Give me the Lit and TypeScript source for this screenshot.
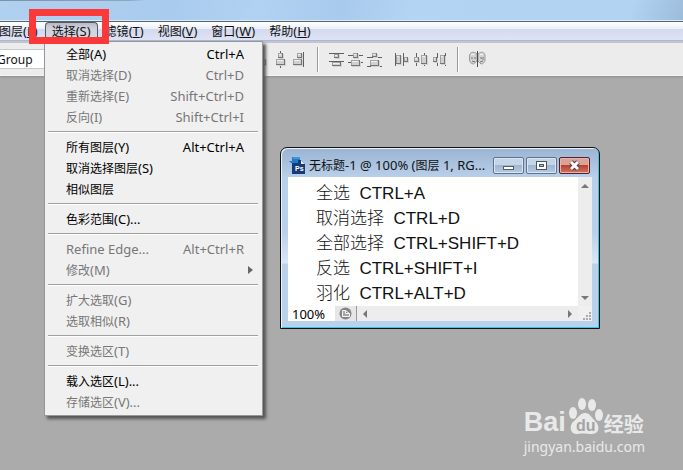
import { LitElement, html, svg, css } from "lit";
import { customElement, property } from "lit/decorators.js";

interface Item {
  label: string;
  keys?: string;
  off?: boolean;
  sub?: boolean;
}

// Latin runs are set one pixel larger than the Chinese glyphs around them.
const mixed = (text: string) =>
  text
    .split(/([\x20-\x7e]+)/)
    .filter((part) => part !== "")
    .map((part) => (/^[\x20-\x7e]/.test(part) ? html`<span class="latin">${part}</span>` : part));

const latin = css`
  .latin {
    font-size: 13px;
  }
`;

const MENUS: [string, string][] = [
  ["图层", "L"],
  ["选择", "S"],
  ["滤镜", "T"],
  ["视图", "V"],
  ["窗口", "W"],
  ["帮助", "H"],
];

const SELECT_MENU: Item[][] = [
  [
    { label: "全部(A)", keys: "Ctrl+A" },
    { label: "取消选择(D)", keys: "Ctrl+D", off: true },
    { label: "重新选择(E)", keys: "Shift+Ctrl+D", off: true },
    { label: "反向(I)", keys: "Shift+Ctrl+I", off: true },
  ],
  [{ label: "所有图层(Y)", keys: "Alt+Ctrl+A" }, { label: "取消选择图层(S)" }, { label: "相似图层" }],
  [{ label: "色彩范围(C)..." }],
  [
    { label: "Refine Edge...", keys: "Alt+Ctrl+R", off: true },
    { label: "修改(M)", off: true, sub: true },
  ],
  [
    { label: "扩大选取(G)", off: true },
    { label: "选取相似(R)", off: true },
  ],
  [{ label: "变换选区(T)", off: true }],
  [{ label: "载入选区(L)..." }, { label: "存储选区(V)...", off: true }],
];

@customElement("menu-bar")
export class MenuBar extends LitElement {
  static styles = [
    latin,
    css`
      :host {
        display: block;
        border-top: 1px solid #56636f;
        border-bottom: 1px solid #b2bbd6;
        background: linear-gradient(#ffffff 0, #eaf0f8 7px, #d3d9ec 7px, #dfe3f7 100%);
      }
      .bar {
        display: flex;
        height: 18px;
        margin-left: -8px;
      }
      .top {
        font: inherit;
        color: #111;
        white-space: nowrap;
        line-height: 16px;
        padding: 0 6px;
        border: 1px solid transparent;
        border-radius: 4px 4px 0 0;
        background: none;
      }
      .open {
        border-color: #555a64 #555a64 transparent;
        background: linear-gradient(#b7bac4, #cfd2dc 5px, #d6d9e4);
      }
      .hot {
        text-decoration: underline;
      }
    `,
  ];
  render() {
    return html`<nav class="bar" aria-label="菜单">
      ${MENUS.map(
        ([name, key]) =>
          html`<button class="top ${key === "S" ? "open" : ""}">${name}<span class="latin">(<span class="hot">${key}</span>)</span></button>`
      )}
    </nav>`;
  }
}

const box = (x: number, y: number, w: number, h: number) => svg`
  <rect x=${x + 1} y=${y + 1} width=${w} height=${h} fill="#d2d2d2"/>
  <rect x=${x} y=${y} width=${w} height=${h} fill="#757575"/>
  <rect x=${x} y=${y} width=${w - 1} height=${h - 1} fill="#a2a2a2"/>
  <rect x=${x + 1} y=${y + 1} width=${w - 2} height=${h - 2} fill="#d0d0d0"/>
  <rect x=${x + 1} y=${y + 1} width=${w - 3} height="1" fill="#f0f0f0"/>`;
const bar = (x: number, y: number, w: number, h: number) =>
  svg`<rect x=${x} y=${y} width=${w} height=${h} fill="#606060"/>`;

const TOOLS = [
  [
    { name: "左对齐", art: svg`${bar(3, 2, 1, 15)}${box(5, 3, 5, 5)}${box(5, 9, 9, 6)}` },
    { name: "水平居中对齐", art: svg`${bar(9, 1, 1, 17)}${box(7, 3, 5, 5)}${box(5, 9, 9, 6)}` },
    { name: "右对齐", art: svg`${bar(13, 2, 1, 15)}${box(7, 3, 5, 5)}${box(3, 9, 9, 6)}` },
  ],
  [
    { name: "按顶分布", art: svg`${bar(2, 3, 15, 1)}${bar(2, 11, 15, 1)}${box(7, 4, 5, 4)}${box(5, 12, 9, 4)}` },
    { name: "垂直居中分布", art: svg`${bar(2, 5, 15, 1)}${bar(2, 12, 15, 1)}${box(7, 3, 5, 5)}${box(5, 10, 9, 6)}` },
    { name: "按底分布", art: svg`${bar(2, 7, 15, 1)}${bar(2, 16, 15, 1)}${box(7, 3, 5, 4)}${box(5, 10, 9, 6)}` },
  ],
  [
    { name: "按左分布", art: svg`${bar(3, 3, 1, 13)}${bar(11, 3, 1, 13)}${box(4, 5, 5, 9)}${box(12, 7, 4, 5)}` },
    { name: "水平居中分布", art: svg`${bar(5, 3, 1, 13)}${bar(13, 3, 1, 13)}${box(3, 7, 5, 5)}${box(10, 5, 6, 9)}` },
    { name: "按右分布", art: svg`${bar(7, 3, 1, 13)}${bar(15, 3, 1, 13)}${box(3, 7, 4, 5)}${box(10, 5, 5, 9)}` },
  ],
];

@customElement("options-bar")
export class OptionsBar extends LitElement {
  static styles = css`
    :host {
      display: block;
      overflow: hidden;
      border-top: 2px solid #c3c5ce;
      border-bottom: 1px solid #f4f4f4;
      background: #ececec;
      box-shadow: 0 1px 2px #8c8c8c;
    }
    .row {
      display: flex;
      align-items: center;
      height: 32px;
      margin-left: -6px;
    }
    .field {
      box-sizing: border-box;
      width: 250px;
      height: 20px;
      margin-right: 8px;
      padding: 0 2px;
      border: 1px solid #c4c9d0;
      font: inherit;
      color: #111;
      background: #fff;
    }
    .set {
      display: flex;
      margin-right: 8px;
    }
    .tool {
      width: 19px;
      height: 18px;
      padding: 0;
      border: 0;
      background: none;
    }
    .icon {
      display: block;
    }
    .rule {
      width: 1px;
      height: 25px;
      margin-right: 8px;
      border-right: 1px solid #fff;
      background: #9a9a9a;
    }
  `;
  render() {
    const group = (tools: (typeof TOOLS)[number]) => html`<div class="set">
      ${tools.map(
        (t) => html`<button class="tool" aria-label=${t.name}>
          <svg class="icon" width="19" height="18" shape-rendering="crispEdges">${t.art}</svg>
        </button>`
      )}
    </div>`;
    return html`<div class="row">
      <input class="field" aria-label="自动选择" value="Group" />
      ${group(TOOLS[0])}
      <div class="rule"></div>
      ${group(TOOLS[1])} ${group(TOOLS[2])}
      <div class="rule"></div>
      <button class="tool" aria-label="自动对齐图层">
        <svg class="icon" width="19" height="18">
          <g fill="#d3d3d3" stroke="#9a9a9a">
            <path d="M10 4C7 1 2.500 2 2.500 6v4c0 2 2 4 4 4l3.500-3z" />
            <path d="M11 4c3-3 7-2 7 2v4c0 2-2 4-4 4l-3-3z" />
          </g>
          <path d="M4 5c1-1 2-1 3 0M13 5c1-1 2-1 3 0" stroke="#fff" fill="none" />
          <path d="M4 8h2M13 8h2M5 11l3 1M13 12l3-1M16 7v3M8 7v2" stroke="#777" fill="none" />
          <path d="M10.500 1v16" stroke="#4c4c4c" />
        </svg>
      </button>
    </div>`;
  }
}

@customElement("drop-menu")
export class DropMenu extends LitElement {
  @property({ attribute: false }) groups: Item[][] = [];
  static styles = [
    latin,
    css`
      :host {
        display: block;
        box-sizing: border-box;
        padding: 1px 2px 3px;
        border: 1px solid #979797;
        background: #f0f0f0;
        box-shadow: 3px 3px 3px #555;
      }
      .group + .group {
        padding-top: 9px;
        background:
          linear-gradient(#a0a0a0, #a0a0a0) 1px 4px / calc(100% - 3px) 1px no-repeat,
          linear-gradient(#fff, #fff) 1px 5px / calc(100% - 3px) 1px no-repeat;
      }
      .item {
        display: flex;
        justify-content: space-between;
        align-items: center;
        width: 100%;
        height: 21px;
        padding: 0 16px 0 19px;
        border: 0;
        font: inherit;
        color: #000;
        background: none;
        white-space: nowrap;
      }
      .item:disabled {
        color: #777;
      }
      .arrow {
        margin-right: -9px;
      }
    `,
  ];
  render() {
    return this.groups.map(
      (group) => html`<div class="group" role="group">
        ${group.map(
          (item) => html`<button class="item" role="menuitem" ?disabled=${item.off}>
            <span>${mixed(item.label)}</span>
            ${item.keys ? html`<span class="latin">${item.keys}</span>` : ""}
            ${item.sub
              ? html`<svg class="arrow" width="5" height="8"><path d="M0 0l5 4-5 4z" fill="#666" /></svg>`
              : ""}
          </button>`
        )}
      </div>`
    );
  }
}

const LINES = [
  ["全选", "CTRL+A"],
  ["取消选择", "CTRL+D"],
  ["全部选择", "CTRL+SHIFT+D"],
  ["反选", "CTRL+SHIFT+I"],
  ["羽化", "CTRL+ALT+D"],
];

@customElement("document-window")
export class DocumentWindow extends LitElement {
  static styles = [
    latin,
    css`
      :host {
        display: block;
        box-sizing: border-box;
        padding: 0 6px 7px;
        border: 1px solid #111;
        border-radius: 7px 7px 0 0;
        background: linear-gradient(#9bb4d2, #b9d0ea 30px, #bad1eb 85px, #d9e7f6 115px, #b9d1ea 116px);
        box-shadow:
          inset 1px 1px #eaf4fc,
          inset -1px -1px #35c4e4;
      }
      .title {
        display: flex;
        align-items: center;
        height: 29px;
        padding: 6px 3px 0 2px;
        box-sizing: border-box;
      }
      .name {
        flex: 1;
        margin-left: 3px;
        color: #111;
        line-height: 18px;
        padding-bottom: 1px;
        white-space: nowrap;
      }
      .ctl {
        display: grid;
        place-items: center;
        box-sizing: border-box;
        width: 31px;
        height: 17px;
        margin-left: 2px;
        padding: 0;
        border: 1px solid #5f7289;
        border-radius: 2px;
        background: linear-gradient(#c4d5e8 50%, #9fb6d0 50%, #b6cbe2);
        box-shadow: inset 0 0 0 1px #dae7f4;
      }
      .close {
        border-color: #55202a;
        background: linear-gradient(#dba298 50%, #b8412f 50%, #cf7763);
        box-shadow: inset 0 0 0 1px #e6b5ad;
      }
      .body {
        display: grid;
        grid-template-columns: 1fr 14px;
        margin: 0 1px;
        background: #fff;
      }
      .page {
        padding: 4px 0 0 28px;
        font: 300 17px/25px "Liberation Sans", "Noto Sans CJK SC", sans-serif;
        color: #111;
      }
      .line {
        margin: 0;
        white-space: pre;
      }
      .vbar {
        display: flex;
        flex-direction: column;
        justify-content: space-between;
        align-items: center;
        box-sizing: border-box;
        padding: 7px 0 6px;
        background: #ededed;
      }
      .foot {
        display: flex;
        height: 15px;
        background: #f0f0f0;
      }
      .zoom {
        box-sizing: border-box;
        width: 47px;
        height: 15px;
        padding: 0 0 0 4px;
        border: 0;
        font-family: inherit;
        color: #000;
        background: #fff;
      }
      .info {
        display: grid;
        place-items: center;
        width: 22px;
        padding: 0;
        border: 0;
        border-right: 1px solid #999;
        background: #e6e6e6;
      }
      .hbar {
        flex: 1;
        display: flex;
        justify-content: space-between;
        align-items: center;
        padding: 0 6px;
        background: #ededed;
      }
      .grip {
        display: grid;
        place-items: end;
        background: #f0f0f0;
      }
      .icon {
        display: block;
      }
    `,
  ];
  render() {
    return html`<header class="title">
        <svg class="icon" width="17" height="17" viewBox="0 0 17 17">
          <path d="M3 3h9l4 4v10H3z" fill="#183b78" />
          <path d="M12 3l4 4h-4z" fill="#dceaf8" />
          <path d="M0 4h3V0h8v3H9v3H2z" fill="#1d7dcb" />
          <path d="M4 1h7" stroke="#63b1ea" />
          <text x="6" y="14" font-family="Liberation Sans" font-weight="700" font-size="7" fill="#fff">Ps</text>
        </svg>
        <span class="name">${mixed("无标题-1 @ 100% (图层 1, RG...")}</span>
        <button class="ctl" aria-label="最小化">
          <svg class="icon" width="13" height="11"><rect x="1.500" y="6.500" width="10" height="3" fill="#fff" stroke="#555f6b" /></svg>
        </button>
        <button class="ctl" aria-label="最大化">
          <svg class="icon" width="11" height="11">
            <rect x="0.500" y="1.500" width="10" height="8" fill="#fff" stroke="#4c5665" />
            <rect x="3.500" y="4.500" width="4" height="2" fill="#a9bdd5" stroke="#4c5665" />
          </svg>
        </button>
        <button class="ctl close" aria-label="关闭">
          <svg class="icon" width="13" height="11">
            <path d="M3 2l7 7M10 2l-7 7" stroke="#5b3b41" stroke-width="5" />
            <path d="M3 2l7 7M10 2l-7 7" stroke="#fff" stroke-width="3" />
          </svg>
        </button>
      </header>
      <div class="body">
        <div class="page">${LINES.map(([name, keys]) => html`<p class="line">${name}  ${keys}</p>`)}</div>
        <div class="vbar">
          <svg class="icon" width="8" height="4"><path d="M0 4l4-4 4 4z" fill="#777" /></svg>
          <svg class="icon" width="8" height="4"><path d="M0 0l4 4 4-4z" fill="#777" /></svg>
        </div>
        <div class="foot">
          <input class="zoom latin" aria-label="缩放" value="100%" />
          <button class="info" aria-label="文档信息">
            <svg class="icon" width="13" height="13">
              <circle cx="6.500" cy="6.500" r="6" fill="#858585" />
              <path d="M3.500 3.500h3v3h4v3h-7z" fill="#a5a5a5" stroke="#f5f5f5" />
              <path d="M6.500 3.500l4 3" stroke="#f5f5f5" />
            </svg>
          </button>
          <div class="hbar">
            <svg class="icon" width="4" height="8"><path d="M4 0l-4 4 4 4z" fill="#777" /></svg>
            <svg class="icon" width="4" height="8"><path d="M0 0l4 4-4 4z" fill="#777" /></svg>
          </div>
        </div>
        <div class="grip">
          <svg class="icon" width="9" height="9" fill="#aaa">
            <path d="M6 0h2v2H6zM3 3h2v2H3zM6 3h2v2H6zM0 6h2v2H0zM3 6h2v2H3zM6 6h2v2H6z" />
          </svg>
        </div>
      </div>`;
  }
}

@customElement("site-mark")
export class SiteMark extends LitElement {
  static styles = css`
    :host {
      display: block;
      color: #e9e9e9;
    }
    .brand {
      display: flex;
      align-items: flex-end;
      height: 40px;
    }
    .bai {
      font: 700 27px/27px "Liberation Sans", sans-serif;
    }
    .paw {
      margin: 0 1px 0 2px;
    }
    .cn {
      font: 700 20px/24px "Noto Sans CJK SC", sans-serif;
    }
    .url {
      margin-top: 2px;
      font: 14px/18px "Noto Sans", sans-serif;
    }
  `;
  render() {
    return html`<div class="brand">
        <span class="bai">Bai</span>
        <svg class="paw" width="35" height="40" fill="#e9e9e9">
          <ellipse cx="5" cy="17" rx="4" ry="6" />
          <ellipse cx="14" cy="8" rx="4" ry="6" />
          <ellipse cx="24" cy="9" rx="4" ry="6" />
          <ellipse cx="31" cy="19" rx="4" ry="6" />
          <path d="M17 17c5 0 7 5 10 8 5 4 5 13-3 13-4 0-10-1-14 0-8 1-9-8-5-12 4-3 7-9 12-9z" />
          <text x="8" y="35" font-family="Liberation Sans" font-weight="700" font-size="16" fill="#a3a3a3">du</text>
        </svg>
        <span class="cn">经验</span>
      </div>
      <div class="url">jingyan.baidu.com</div>`;
  }
}

@customElement("app-root")
export class AppRoot extends LitElement {
  static styles = css`
    :host {
      display: flex;
      flex-direction: column;
      position: relative;
      min-height: 100vh;
      overflow: hidden;
      font: 12px "Noto Sans", "Noto Sans CJK SC", sans-serif;
      background: #ababab;
    }
    .glass {
      height: 20px;
      border-bottom: 1px solid #dcecfa;
      background:
        linear-gradient(90deg, #7a92a8, #8ea8c0 130px, transparent 145px) 0 0 / 100% 1px no-repeat,
        linear-gradient(110deg, transparent 92%, #9dbcdb 100%),
        linear-gradient(100deg, #b0d0f0 0, #a9cbed 25%, #b1d2f2 38%, #a8caec 50%, #b3d4f3 60%, #b1d2f1 100%);
    }
    .menu {
      position: absolute;
      left: 44px;
      top: 41px;
      width: 219px;
    }
    .marker {
      position: absolute;
      left: 29px;
      top: 9px;
      box-sizing: border-box;
      width: 80px;
      height: 35px;
      border: 7px solid #fb3938;
      pointer-events: none;
    }
    .doc {
      position: absolute;
      left: 280px;
      top: 147px;
      width: 320px;
    }
    .mark {
      position: absolute;
      right: 38px;
      bottom: 14px;
    }
  `;
  render() {
    return html`<div class="glass"></div>
      <menu-bar></menu-bar>
      <options-bar></options-bar>
      <document-window class="doc"></document-window>
      <drop-menu class="menu" .groups=${SELECT_MENU}></drop-menu>
      <div class="marker"></div>
      <site-mark class="mark"></site-mark>`;
  }
}
